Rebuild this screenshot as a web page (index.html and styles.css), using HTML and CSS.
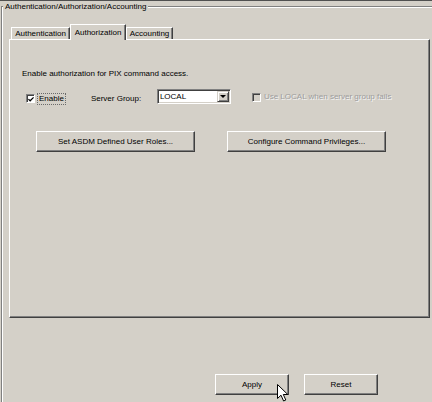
FILE: index.html
```html
<!DOCTYPE html>
<html lang="en">
<head>
    <meta charset="UTF-8">
    <meta name="viewport" content="width=device-width, initial-scale=1.0">
    <title>AAA Settings</title>
    <link rel="stylesheet" href="styles.css">
</head>
<body>
    <div class="group">
        <div class="group-title">Authentication/Authorization/Accounting</div>

        <div class="tabs">
            <div class="tab tab-authn">Authentication</div>
            <div class="tab tab-authz active">Authorization</div>
            <div class="tab tab-acct">Accounting</div>
        </div>

        <div class="panel">
            <p class="intro">Enable authorization for PIX command access.</p>

            <div class="options">
                <span class="check checked">
                    <svg width="7" height="7" viewBox="0 0 7 7"><path d="M0.5 3 L2.5 5 L6.5 1" fill="none" stroke="#000" stroke-width="1.4"/></svg>
                </span>
                <span class="focus-label">Enable</span>
                <span class="field-label">Server Group:</span>
                <div class="combo">
                    <span class="combo-value">LOCAL</span>
                    <span class="combo-btn"><span class="arrow"></span></span>
                </div>
                <span class="check disabled"></span>
                <span class="disabled-text">Use LOCAL when server group fails</span>
            </div>

            <div class="actions">
                <button class="btn btn-wide">Set ASDM Defined User Roles...</button>
                <button class="btn btn-wide btn-second">Configure Command Privileges...</button>
            </div>
        </div>

        <div class="footer">
            <button class="btn btn-small">Apply</button>
            <button class="btn btn-small btn-reset">Reset</button>
        </div>
    </div>

    <!-- mouse pointer sitting over the Apply button -->
    <svg class="cursor" width="13" height="19" viewBox="0 0 13 19">
        <path d="M0.5 0.5 L0.5 14.5 L4 11.2 L6.6 17 L8.8 16 L6.3 10.5 L10.8 10.5 Z" fill="#fff" stroke="#000" stroke-width="1" stroke-linejoin="miter"/>
    </svg>
</body>
</html>
```

FILE: styles.css
```css
* { box-sizing: border-box; }
html, body { margin: 0; padding: 0; }
body { position: relative; width: 432px; height: 402px; overflow: hidden; background: #d4d0c8; border-top: 1px solid #505050; font-family: "Liberation Sans", Arial, sans-serif; font-size: 8px; color: #000; }

/* outer titled border */
.group { margin: 5px 0 0 1px; padding: 1px 0 0 1px; height: 396px; border-top: 1px solid #808080; border-left: 1px solid #808080; box-shadow: inset 1px 1px #fff; }
.group-title { width: fit-content; margin-top: -6px; padding: 0 2px; line-height: 10px; background: #d4d0c8; white-space: nowrap; }

/* tab strip */
.tabs { display: flex; align-items: flex-end; height: 15px; margin: 12px 0 0 8px; }
.tab { height: 12px; line-height: 11px; text-align: center; white-space: nowrap; background: #d4d0c8; border-top: 1px solid #fff; border-left: 1px solid #fff; border-right: 1px solid #404040; box-shadow: inset -1px 0 #808080; }
.tab-authn { width: 59px; }
.tab-authz { width: 56px; }
.tab-acct { width: 47px; }
.tab.active { position: relative; z-index: 1; height: 16px; margin-bottom: -1px; padding-top: 2px; }

/* tab page */
.panel { width: 421px; height: 279px; margin-left: 6px; padding-left: 12px; border-top: 1px solid #fff; border-left: 1px solid #fff; border-right: 1px solid #404040; border-bottom: 1px solid #404040; box-shadow: inset -1px -1px #808080; }
.intro { margin: 29px 0 0; line-height: 10px; }

.options { display: flex; align-items: flex-start; height: 15px; margin-top: 10px; white-space: nowrap; }
.check { display: flex; align-items: center; justify-content: center; width: 9px; height: 9px; flex: none; background: #fff; border: 1px solid; border-color: #808080 #fff #fff #808080; box-shadow: inset 1px 1px #404040; }
.check.checked { margin: 5px 0 0 4px; }
.check.checked svg { margin: 1px 0 0 1px; }
.check.disabled { margin: 4px 0 0 21px; background: #d4d0c8; }
.focus-label { height: 12px; margin: 4px 0 0 2px; padding: 0 1px; line-height: 10px; border: 1px dotted #6a6a6a; }
.field-label { width: 66px; margin: 5px 0 0 25px; line-height: 10px; }
.disabled-text { margin: 3px 0 0 3px; line-height: 10px; color: #9c9c9c; text-shadow: 1px 1px #f4f4f4; }

.combo { display: flex; width: 74px; height: 15px; padding: 1px; background: #fff; border: 1px solid; border-color: #808080 #fff #fff #808080; box-shadow: inset 1px 1px #404040, inset -1px -1px #d4d0c8; }
.combo-value { flex: 1; padding-left: 1px; line-height: 11px; }
.combo-btn { display: flex; align-items: center; justify-content: center; width: 12px; height: 11px; background: #d4d0c8; border: 1px solid; border-color: #d4d0c8 #404040 #404040 #d4d0c8; box-shadow: inset 1px 1px #fff, inset -1px -1px #808080; }
.arrow { width: 0; height: 0; border-left: 3px solid transparent; border-right: 3px solid transparent; border-top: 3px solid #000; }

/* push buttons */
.btn { display: flex; align-items: center; justify-content: center; padding: 0; margin: 0; height: 21px; font: inherit; line-height: 10px; color: #000; background: #d4d0c8; border: 1px solid; border-color: #fff #404040 #404040 #fff; box-shadow: inset -1px -1px #808080; }
.actions { display: flex; margin: 27px 0 0 14px; }
.btn-wide { width: 159px; }
.btn-second { margin-left: 32px; }

.footer { display: flex; margin: 56px 0 0 212px; }
.btn-small { width: 74px; }
.btn-reset { margin-left: 15px; }

.cursor { position: absolute; left: 277px; top: 383px; }
```
